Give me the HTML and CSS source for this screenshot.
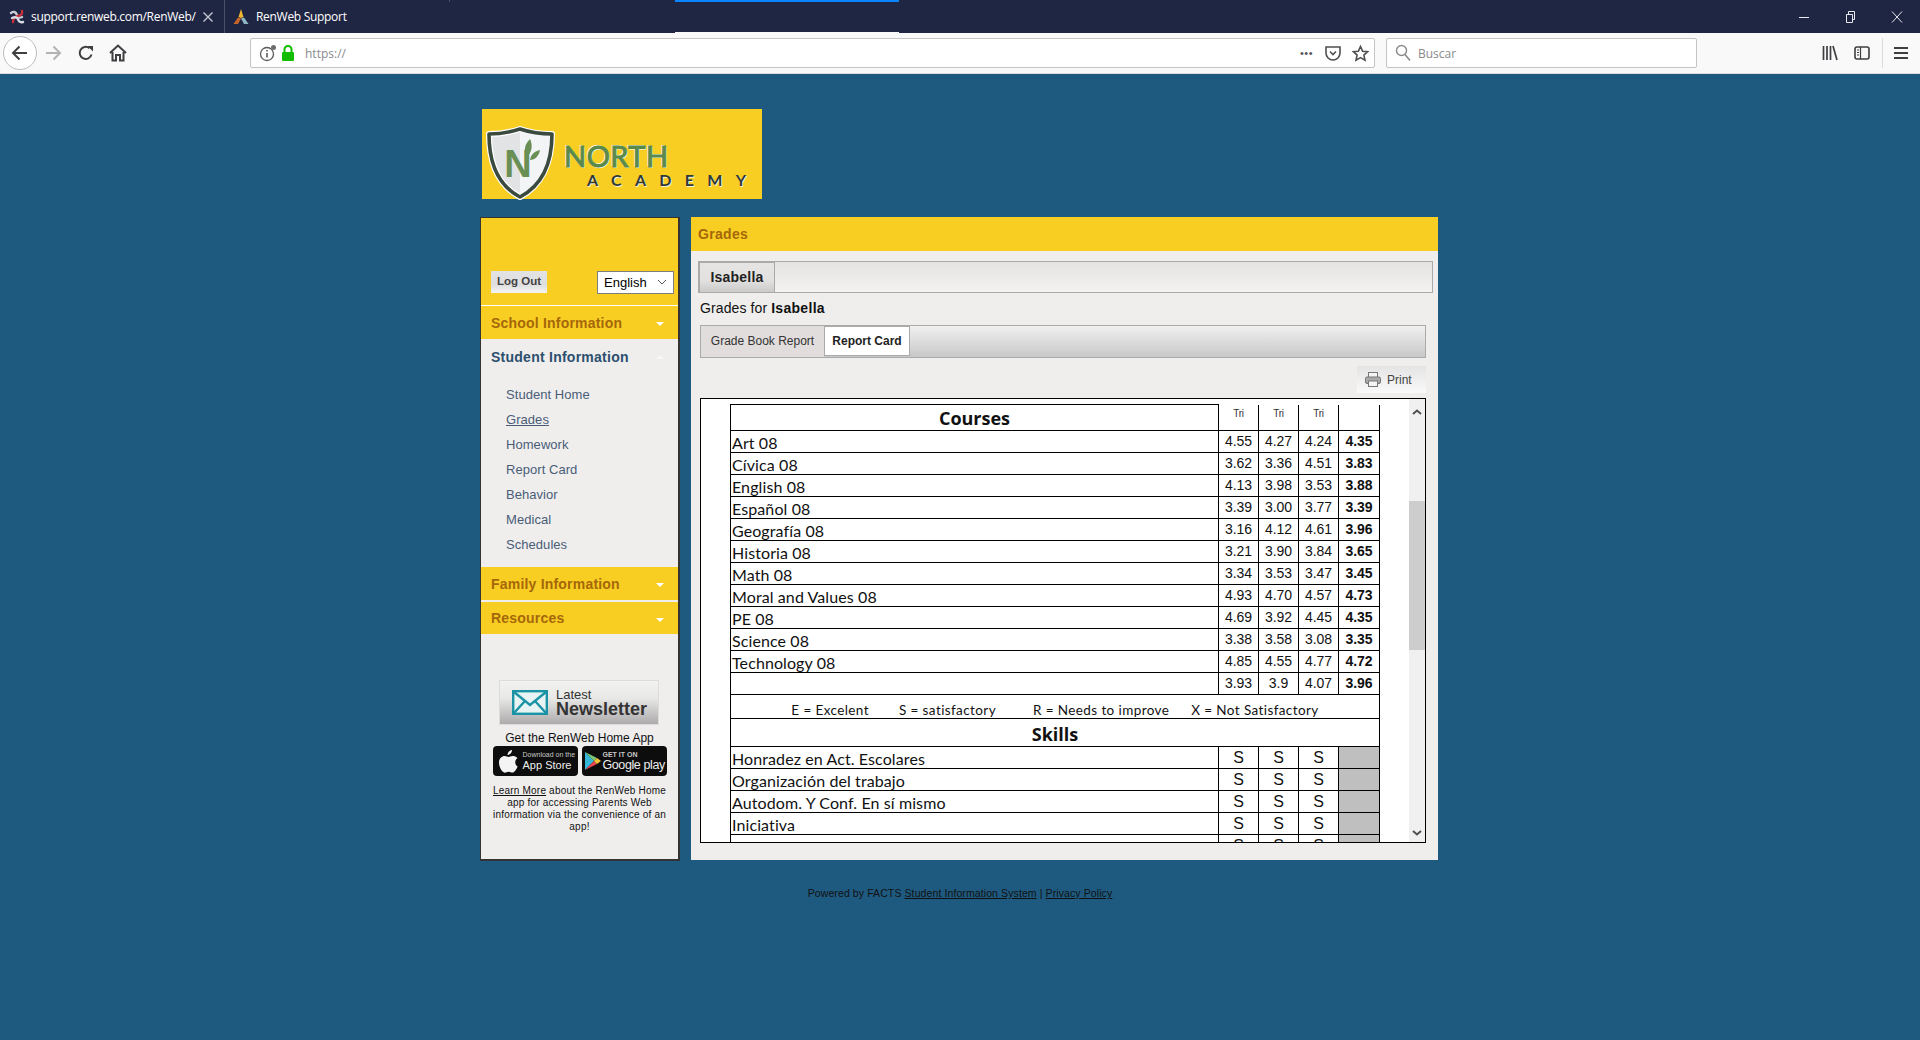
FILE: index.html
```html
<!DOCTYPE html>
<html lang="en">
<head>
  <meta charset="UTF-8">
  <title>Grades</title>
  <link rel="stylesheet" href="styles.css">
</head>
<body>
  <!-- browser chrome -->
  <div class="tabstrip">
    <div class="tab tab-first">
      <svg class="fav" width="16" height="16" viewBox="0 0 16 16"><g fill="none" stroke-width="2.4" stroke-linecap="round"><path d="M2 4 Q6 1 8 6 Q9 10 13 8" stroke="#c9cdd6"/><path d="M13 2 Q14 6 9 7 Q4 8 4 13" stroke="#c8303c"/><path d="M3 9 Q7 7 9 10 Q10 14 14 13" stroke="#d8dbe2"/></g></svg>
      <span class="tab-title">support.renweb.com/RenWeb/</span>
      <svg class="tab-close" width="12" height="12" viewBox="0 0 12 12"><path d="M1.5 1.5 L10.5 10.5 M10.5 1.5 L1.5 10.5" stroke="#c6c8d0" stroke-width="1.4"/></svg>
    </div>
    <div class="tab tab-second">
      <svg class="fav" width="18" height="18" viewBox="0 0 18 18"><path d="M9 1 L11.5 9 L9 10 L6.5 9 Z" fill="#f2b632"/><path d="M6 9.5 L9 10.5 L6 16 L1.5 16 Z" fill="#c9652a"/><path d="M12 9.5 L9 10.5 L12 16 L16.5 16 Z" fill="#8fb6c4"/></svg>
      <span class="tab-title">RenWeb Support</span>
    </div>
    <div class="tab-mark"></div>
    <div class="tab-active"></div>
    <div class="win-controls">
      <svg width="10" height="10" viewBox="0 0 10 10"><path d="M0 5.5 H10" stroke="#e8e9ee" stroke-width="1"/></svg>
      <svg width="10" height="12" viewBox="0 0 10 12"><path d="M1.5 3.5 H7.5 V11.5 H1.5 Z M3.5 3.5 V.5 H9.5 V8.5 H7.5" fill="none" stroke="#e8e9ee"/></svg>
      <svg width="12" height="12" viewBox="0 0 12 12"><path d="M1 0.5 L11 11.5 M11 0.5 L1 11.5" stroke="#e8e9ee" stroke-width="1"/></svg>
    </div>
  </div>

  <div class="toolbar">
    <div class="back-btn">
      <svg width="18" height="18" viewBox="0 0 18 18"><path d="M16 9 H2 M8.5 2.5 L2 9 L8.5 15.5" fill="none" stroke="#3f3f42" stroke-width="2"/></svg>
    </div>
    <svg class="tool-forward" width="18" height="18" viewBox="0 0 18 18"><path d="M2 9 H16 M9.5 2.5 L16 9 L9.5 15.5" fill="none" stroke="#b3b3b5" stroke-width="2"/></svg>
    <svg class="tool-reload" width="16" height="16" viewBox="0 0 16 16"><path d="M13.5 9.5 A6 6 0 1 1 11.5 3.2" fill="none" stroke="#3f3f42" stroke-width="2"/><path d="M9.5 1 H15 V6.5 Z" fill="#3f3f42"/></svg>
    <svg class="tool-home" width="18" height="18" viewBox="0 0 18 18"><path d="M1 9 L9 1.5 L17 9 M3.5 8 V16.5 H7 V11 H11 V16.5 H14.5 V8" fill="none" stroke="#3f3f42" stroke-width="2"/></svg>

    <div class="urlbar">
      <svg class="url-info" width="18" height="18" viewBox="0 0 18 18"><circle cx="8" cy="10" r="6.5" fill="none" stroke="#5b5b5f" stroke-width="1.3"/><path d="M8 9 V13.5 M8 6 V7.5" stroke="#5b5b5f" stroke-width="1.6"/><circle cx="14.5" cy="3.5" r="2.5" fill="#6d6d70"/></svg>
      <svg class="url-lock" width="14" height="16" viewBox="0 0 14 16"><path d="M3.5 7 V4.5 A3.5 3.5 0 0 1 10.5 4.5 V7" fill="none" stroke="#12bc00" stroke-width="2"/><rect x="1" y="7" width="12" height="9" rx="1" fill="#12bc00"/></svg>
      <span class="url-text">https://</span>
      <span class="url-dots">•••</span>
      <svg class="url-pocket" width="16" height="16" viewBox="0 0 16 16"><path d="M1 2 H15 V8 A7 7 0 0 1 1 8 Z" fill="none" stroke="#4f4f52" stroke-width="1.6"/><path d="M5 6.5 L8 9.5 L11 6.5" fill="none" stroke="#4f4f52" stroke-width="1.6"/></svg>
      <svg class="url-star" width="17" height="17" viewBox="0 0 17 17"><path d="M8.5 1.5 L10.6 6.2 L15.7 6.7 L11.9 10.1 L13 15.2 L8.5 12.6 L4 15.2 L5.1 10.1 L1.3 6.7 L6.4 6.2 Z" fill="none" stroke="#4f4f52" stroke-width="1.6"/></svg>
    </div>

    <div class="searchbar">
      <svg width="16" height="18" viewBox="0 0 16 18"><circle cx="6.5" cy="6.5" r="5" fill="none" stroke="#8a8a8d" stroke-width="1.4"/><path d="M10 10.5 L15 16.5" stroke="#8a8a8d" stroke-width="1.6"/></svg>
      <span>Buscar</span>
    </div>

    <svg class="tool-library" width="16" height="16" viewBox="0 0 16 16"><path d="M1.5 1 V15 M5 1 V15 M8.5 1 V15 M11 1 L15 15" stroke="#3f3f42" stroke-width="1.7" fill="none"/></svg>
    <svg class="tool-sidebar" width="16" height="16" viewBox="0 0 16 16"><rect x="1" y="2" width="14" height="12" rx="2" fill="none" stroke="#3f3f42" stroke-width="1.6"/><path d="M6.5 2 V14 M3 5 H5 M3 7.5 H5 M3 10 H5" stroke="#3f3f42" stroke-width="1.2"/></svg>
    <div class="tool-sep"></div>
    <svg class="tool-menu" width="14" height="14" viewBox="0 0 14 14"><path d="M0 2 H14 M0 7 H14 M0 12 H14" stroke="#3f3f42" stroke-width="2"/></svg>
  </div>

  <!-- page -->
  <div class="page">
    <div class="wrap">
      <div class="logo">
        <svg class="logo-shield" width="70" height="74" viewBox="0 0 70 74">
          <path d="M4 8 Q20 8 35 3 Q50 8 67 8 C67 38 56 60 35 71 C14 60 4 38 4 8 Z" fill="#e2e3e5" stroke="#fff" stroke-width="6" stroke-linejoin="round"/>
          <path d="M35 3 Q50 8 67 8 C67 38 56 60 35 71 Z" fill="#f3f4f5"/>
          <path d="M4 8 Q20 8 35 3 Q50 8 67 8 C67 38 56 60 35 71 C14 60 4 38 4 8 Z" fill="none" stroke="#3b4a3f" stroke-width="3.6" stroke-linejoin="round"/>
          <text x="33" y="51" text-anchor="middle" class="shield-n">N</text>
          <path d="M42 31 C38 24 40 18 45 13 C48 19 47 26 42 31 Z M45 34 C46 28 50 25 55 24 C54 30 50 34 45 34 Z" fill="#6a8f55"/>
        </svg>
        <div class="logo-text">
          <div class="logo-north">NORTH</div>
          <div class="logo-academy">ACADEMY</div>
        </div>
      </div>

      <div class="columns">
        <div class="sidebar">
          <div class="side-top">
            <span class="logout">Log Out</span>
            <div class="lang">English
              <svg width="10" height="6" viewBox="0 0 10 6"><path d="M1 1 L5 5 L9 1" fill="none" stroke="#555" stroke-width="1"/></svg>
            </div>
          </div>
          <div class="side-head side-head-line">School Information<i class="caret"></i></div>
          <div class="side-open">Student Information<i class="caret caret-up"></i></div>
          <ul class="side-links">
            <li>Student Home</li>
            <li class="current">Grades</li>
            <li>Homework</li>
            <li>Report Card</li>
            <li>Behavior</li>
            <li>Medical</li>
            <li>Schedules</li>
          </ul>
          <div class="side-head">Family Information<i class="caret"></i></div>
          <div class="side-head side-head-next">Resources<i class="caret"></i></div>

          <div class="newsletter">
            <svg width="36" height="25" viewBox="0 0 36 25"><rect x="1.2" y="1.2" width="33.6" height="22.6" fill="#e8f3f4" stroke="#1a93a5" stroke-width="2.4"/><path d="M2 2 L18 15 L34 2 M2 23 L13 11 M34 23 L23 11" fill="none" stroke="#1a93a5" stroke-width="2.4"/></svg>
            <div class="news-text"><span>Latest</span><b>Newsletter</b></div>
          </div>
          <div class="app-title">Get the RenWeb Home App</div>
          <div class="badges">
            <div class="badge badge-apple">
              <svg width="19" height="23" viewBox="0 0 19 23"><path d="M13 0 C13.2 2.6 11 5 8.6 4.9 C8.4 2.6 10.7 .2 13 0 Z M18.6 16.5 C17.6 19 15.6 22.6 13.4 22.6 C12 22.6 11.4 21.7 9.6 21.7 C7.8 21.7 7.2 22.6 5.8 22.7 C3.4 22.8 0 17.6 0 12.6 C0 8.2 3 6 5.6 6 C7.2 6 8.6 7 9.6 7 C10.6 7 12.2 5.8 14.2 6 C15 6 17.2 6.4 18.4 8.2 C15.2 10.2 15.8 15.2 18.6 16.5 Z" fill="#f4f4f4"/></svg>
              <div><small>Download on the</small><span>App Store</span></div>
            </div>
            <div class="badge badge-google">
              <svg width="16" height="18" viewBox="0 0 16 18"><path d="M0 0 L9 9 L0 18 Z" fill="#35b8d8"/><path d="M0 0 L12 6 L9 9 Z" fill="#7cc576"/><path d="M0 18 L12 12 L9 9 Z" fill="#e8434f"/><path d="M12 6 L16 9 L12 12 L9 9 Z" fill="#f6c333"/></svg>
              <div><small>GET IT ON</small><span>Google play</span></div>
            </div>
          </div>
          <p class="app-note"><u>Learn More</u> about the RenWeb Home app for accessing Parents Web information via the convenience of an app!</p>
        </div>

        <div class="main">
          <div class="main-head">Grades</div>
          <div class="student-tabs"><div class="student-tab">Isabella</div></div>
          <div class="grades-for">Grades for <b>Isabella</b></div>
          <div class="report-tabs">
            <div class="report-tab">Grade Book Report</div>
            <div class="report-tab report-tab-on">Report Card</div>
          </div>
          <div class="print-row">
            <div class="print-btn">
              <svg width="16" height="15" viewBox="0 0 16 15"><rect x="3.5" y=".5" width="9" height="5" fill="#f4f4f4" stroke="#777"/><rect x=".5" y="5" width="15" height="6.5" rx="1.5" fill="#a9a9a9" stroke="#777"/><rect x="3.5" y="9" width="9" height="5.5" fill="#f4f4f4" stroke="#777"/></svg>
              Print
            </div>
          </div>

          <div class="frame">
            <div class="frame-view">
              <table class="card">
                <colgroup><col class="c-name"><col class="c-num"><col class="c-num"><col class="c-num"><col class="c-last"></colgroup>
                <tr class="r-head"><th class="h-courses">Courses</th><td class="tri">Tri</td><td class="tri">Tri</td><td class="tri">Tri</td><td class="tri"></td></tr>
                <tr><td class="name">Art 08</td><td>4.55</td><td>4.27</td><td>4.24</td><td class="avg">4.35</td></tr>
                <tr><td class="name">Cívica 08</td><td>3.62</td><td>3.36</td><td>4.51</td><td class="avg">3.83</td></tr>
                <tr><td class="name">English 08</td><td>4.13</td><td>3.98</td><td>3.53</td><td class="avg">3.88</td></tr>
                <tr><td class="name">Español 08</td><td>3.39</td><td>3.00</td><td>3.77</td><td class="avg">3.39</td></tr>
                <tr><td class="name">Geografía 08</td><td>3.16</td><td>4.12</td><td>4.61</td><td class="avg">3.96</td></tr>
                <tr><td class="name">Historia 08</td><td>3.21</td><td>3.90</td><td>3.84</td><td class="avg">3.65</td></tr>
                <tr><td class="name">Math 08</td><td>3.34</td><td>3.53</td><td>3.47</td><td class="avg">3.45</td></tr>
                <tr><td class="name">Moral and Values 08</td><td>4.93</td><td>4.70</td><td>4.57</td><td class="avg">4.73</td></tr>
                <tr><td class="name">PE 08</td><td>4.69</td><td>3.92</td><td>4.45</td><td class="avg">4.35</td></tr>
                <tr><td class="name">Science 08</td><td>3.38</td><td>3.58</td><td>3.08</td><td class="avg">3.35</td></tr>
                <tr><td class="name">Technology 08</td><td>4.85</td><td>4.55</td><td>4.77</td><td class="avg">4.72</td></tr>
                <tr><td class="name"></td><td>3.93</td><td>3.9</td><td>4.07</td><td class="avg">3.96</td></tr>
                <tr class="r-legend"><td colspan="5"><span>E = Excelent</span><span class="lg-s">S = satisfactory</span><span class="lg-r">R = Needs to improve</span><span class="lg-x">X = Not Satisfactory</span></td></tr>
                <tr class="r-skills"><th colspan="5">Skills</th></tr>
                <tr class="skill"><td class="name">Honradez en Act. Escolares</td><td>S</td><td>S</td><td>S</td><td class="blank"></td></tr>
                <tr class="skill"><td class="name">Organización del trabajo</td><td>S</td><td>S</td><td>S</td><td class="blank"></td></tr>
                <tr class="skill"><td class="name">Autodom. Y Conf. En sí mismo</td><td>S</td><td>S</td><td>S</td><td class="blank"></td></tr>
                <tr class="skill"><td class="name">Iniciativa</td><td>S</td><td>S</td><td>S</td><td class="blank"></td></tr>
                <tr class="skill"><td class="name">Compromiso</td><td>S</td><td>S</td><td>S</td><td class="blank"></td></tr>
              </table>
            </div>
            <div class="scrollbar">
              <div class="scroll-arrow"><svg width="10" height="6" viewBox="0 0 10 6"><path d="M1 5 L5 1.5 L9 5" fill="none" stroke="#505050" stroke-width="2"/></svg></div>
              <div class="scroll-thumb"></div>
              <div class="scroll-arrow scroll-arrow-end"><svg width="10" height="6" viewBox="0 0 10 6"><path d="M1 1 L5 4.5 L9 1" fill="none" stroke="#505050" stroke-width="2"/></svg></div>
            </div>
          </div>
        </div>
      </div>

      <div class="footer">Powered by FACTS <u>Student Information System</u> | <u>Privacy Policy</u></div>
    </div>
  </div>
</body>
</html>
```

FILE: styles.css
```css
body {
  margin: 0;
  height: 1040px;
  overflow: hidden;
  background: #1e5a80;
  font-family: "Liberation Sans", Arial, sans-serif;
}

/* browser chrome */
.tabstrip {
  display: flex;
  align-items: center;
  height: 33px;
  background: #1f2644;
  color: #fff;
  font-family: "Open Sans", sans-serif;
  font-size: 12px;
  letter-spacing: -.3px;
}

.tab {
  display: flex;
  align-items: center;
  height: 33px;
  box-sizing: border-box;
}

.tab-first {
  width: 225px;
  padding-left: 9px;
  border-right: 1px solid #4b5068;
}

.tab-first .tab-title {
  width: 166px;
  margin-left: 6px;
  overflow: hidden;
  white-space: nowrap;
}

.tab-close {
  margin-left: 5px;
}

.tab-second {
  width: 224px;
  padding-left: 7px;
}

.tab-second .tab-title {
  margin-left: 6px;
}

.tab-mark {
  width: 1px;
  height: 2px;
  align-self: flex-start;
  background: #4b5068;
}

.tab-active {
  width: 224px;
  height: 33px;
  margin-left: 225px;
  box-sizing: border-box;
  border-top: 2px solid #0a84ff;
  border-bottom: 1px solid #f9f9fa;
}

.win-controls {
  display: flex;
  align-items: center;
  gap: 36px;
  margin-left: auto;
  margin-right: 17px;
}

.toolbar {
  display: flex;
  align-items: center;
  height: 41px;
  box-sizing: border-box;
  background: #f9f9fa;
  border-bottom: 1px solid #dcdcde;
}

.back-btn {
  display: flex;
  align-items: center;
  justify-content: center;
  width: 32px;
  height: 32px;
  margin-left: 3px;
  border: 1px solid #bdbdbf;
  border-radius: 50%;
  background: #fff;
}

.tool-forward { margin-left: 7px; }
.tool-reload { margin-left: 16px; }
.tool-home { margin-left: 15px; }

.urlbar {
  display: flex;
  align-items: center;
  width: 1125px;
  height: 30px;
  margin-left: 123px;
  box-sizing: border-box;
  background: #fff;
  border: 1px solid #c4c4c6;
  border-radius: 2px;
}

.url-info { margin-left: 8px; }
.url-lock { margin-left: 4px; }

.url-text {
  margin-left: 10px;
  color: #8a8a8d;
  font-family: "Open Sans", sans-serif;
  font-size: 12px;
}

.url-dots {
  margin-left: auto;
  color: #55555a;
  font-size: 11px;
  letter-spacing: .5px;
}

.url-pocket { margin-left: 12px; }
.url-star { margin-left: 11px; margin-right: 5px; }

.searchbar {
  display: flex;
  align-items: center;
  gap: 7px;
  width: 311px;
  height: 30px;
  margin-left: 11px;
  padding-left: 8px;
  box-sizing: border-box;
  background: #fff;
  border: 1px solid #c4c4c6;
  border-radius: 2px;
  color: #8a8a8d;
  font-family: "Open Sans", sans-serif;
  font-size: 12px;
}

.tool-library { margin-left: 125px; }
.tool-sidebar { margin-left: 16px; }

.tool-sep {
  width: 1px;
  height: 30px;
  margin-left: 12px;
  background: #dcdcde;
}

.tool-menu { margin-left: 11px; }

/* page */
.page {
  padding-top: 35px;
}

.wrap {
  width: 960px;
  margin: 0 auto;
}

.logo {
  display: flex;
  width: 280px;
  height: 90px;
  margin-left: 2px;
  padding: 17px 0 0 3px;
  box-sizing: border-box;
  background: #f9ce23;
}

.logo-shield {
  flex-shrink: 0;
}

.shield-n {
  font-family: "Liberation Sans", sans-serif;
  font-size: 38px;
  font-weight: bold;
  fill: #6a8f55;
}

.logo-text {
  margin-left: 9px;
  padding-top: 16px;
}

.logo-north {
  color: #5a8a4a;
  font-family: Lato, sans-serif;
  font-size: 29px;
  line-height: 27px;
  letter-spacing: .5px;
  -webkit-text-stroke: 1px #5a8a4a;
  text-shadow: 1px 1px 0 #fff, -1px -1px 0 #fff;
}

.logo-academy {
  margin-top: 3px;
  padding-left: 23px;
  color: #2f3a33;
  font-family: Lato, sans-serif;
  font-size: 16px;
  font-weight: bold;
  line-height: 15px;
  letter-spacing: 13.3px;
  white-space: nowrap;
  text-shadow: 1px 1px 0 #f6f3e0;
}

.columns {
  display: flex;
  gap: 11px;
  margin-top: 18px;
}

/* sidebar */
.sidebar {
  width: 200px;
  height: 644px;
  box-sizing: border-box;
  background: #efeeed;
  border: 1px solid #333;
  border-right-width: 2px;
  border-bottom-width: 2px;
}

.side-top {
  display: flex;
  align-items: center;
  justify-content: space-between;
  height: 87px;
  padding: 41px 4px 0 10px;
  box-sizing: border-box;
  background: #f9ce23;
}

.logout {
  display: block;
  width: 56px;
  height: 22px;
  background: linear-gradient(#e4e3e3, #dfdede 60%, #f4f4f4);
  color: #444;
  font-size: 11.5px;
  font-weight: bold;
  line-height: 21px;
  text-align: center;
}

.lang {
  display: flex;
  align-items: center;
  justify-content: space-between;
  width: 77px;
  height: 23px;
  padding: 0 6px;
  box-sizing: border-box;
  background: #fff;
  border: 1px solid #7d7d7d;
  font-size: 13px;
}

.side-head {
  display: flex;
  align-items: center;
  justify-content: space-between;
  height: 33px;
  padding: 0 14px 0 10px;
  background: #f9ce23;
  color: #a5670a;
  font-size: 14px;
  font-weight: bold;
  letter-spacing: .2px;
}

.side-head-line {
  height: 33px;
  border-top: 1px solid #fff;
}

.side-head-next {
  height: 32px;
  margin-top: 2px;
}

.caret {
  width: 0;
  height: 0;
  margin-top: 3px;
  border-top: 4px solid #fff;
  border-left: 4px solid transparent;
  border-right: 4px solid transparent;
}

.caret-up {
  margin-top: 0;
  border-top: 0;
  border-bottom: 4px solid #f6f6f6;
}

.side-open {
  display: flex;
  align-items: center;
  justify-content: space-between;
  height: 36px;
  padding: 0 14px 0 10px;
  color: #2c4f6e;
  font-size: 14px;
  font-weight: bold;
  letter-spacing: .25px;
}

.side-links {
  height: 192px;
  margin: 0;
  padding: 7px 0 0 25px;
  box-sizing: border-box;
  list-style: none;
  color: #4a5d78;
  font-size: 13px;
  letter-spacing: .05px;
}

.side-links li {
  height: 25px;
  line-height: 25px;
}

.side-links .current {
  text-decoration: underline;
}

.newsletter {
  display: flex;
  align-items: center;
  gap: 8px;
  width: 160px;
  height: 45px;
  margin: 46px 0 0 18px;
  padding-left: 12px;
  box-sizing: border-box;
  background: linear-gradient(#f2f2f1, #e8e8e7 40%, #adabab);
  border: 1px solid #dcdcdc;
}

.news-text {
  display: flex;
  flex-direction: column;
  color: #333;
  line-height: 14px;
  font-size: 13px;
}

.news-text b {
  font-size: 18px;
  line-height: 15px;
}

.app-title {
  margin-top: 6px;
  color: #111;
  font-size: 12px;
  line-height: 14px;
  text-align: center;
}

.badges {
  display: flex;
  justify-content: center;
  gap: 4px;
  margin-top: 1px;
}

.badge {
  display: flex;
  align-items: center;
  height: 30px;
  box-sizing: border-box;
  background: #0d0d0d;
  border-radius: 4px;
  color: #eee;
}

.badge-apple { width: 85px; padding-left: 6px; gap: 5px; }
.badge-google { width: 85px; padding-left: 3px; gap: 2px; }

.badge small {
  display: block;
  font-size: 7px;
  line-height: 8px;
  color: #c8c8c8;
  white-space: nowrap;
}

.badge span {
  display: block;
  font-size: 11px;
  line-height: 13px;
  white-space: nowrap;
}

.badge-google small {
  font-weight: bold;
}

.badge-google span {
  font-size: 12.5px;
  letter-spacing: -.4px;
}

.app-note {
  margin: 9px 5px 0;
  color: #111;
  font-size: 10px;
  line-height: 12px;
  letter-spacing: .2px;
  text-align: center;
}

/* main panel */
.main {
  width: 747px;
  height: 643px;
  background: #efeeed;
}

.main-head {
  height: 34px;
  padding-left: 7px;
  background: #f9ce23;
  color: #a5670a;
  font-size: 14px;
  font-weight: bold;
  letter-spacing: .3px;
  line-height: 34px;
}

.student-tabs {
  height: 32px;
  margin: 10px 5px 0 7px;
  box-sizing: border-box;
  background: linear-gradient(#e4e3e2, #f3f2f1);
  border: 1px solid #aaa;
}

.student-tab {
  width: 76px;
  height: 30px;
  box-sizing: border-box;
  background: linear-gradient(#e6e5e4, #e2e1e0 60%, #cbcaca);
  border-top: 1px solid #aaa;
  border-right: 1px solid #aaa;
  border-left: 1px solid #aaa;
  color: #222;
  font-size: 14px;
  font-weight: bold;
  letter-spacing: .2px;
  line-height: 28px;
  text-align: center;
}

.grades-for {
  height: 32px;
  margin-left: 9px;
  font-size: 14px;
  letter-spacing: .1px;
  line-height: 31px;
  color: #111;
}

.grades-for b {
  letter-spacing: .3px;
}

.report-tabs {
  display: flex;
  width: 726px;
  height: 33px;
  margin-left: 9px;
  box-sizing: border-box;
  background: linear-gradient(#f0f0f0, #c8c8c8);
  border: 1px solid #aaa;
}

.report-tab {
  width: 123px;
  height: 31px;
  background: #e1dddc;
  color: #333;
  font-size: 12px;
  line-height: 31px;
  text-align: center;
}

.report-tab-on {
  width: 86px;
  height: 30px;
  box-sizing: border-box;
  background: #fff;
  border: 1px solid #aaa;
  color: #222;
  font-weight: bold;
  line-height: 28px;
}

.print-row {
  display: flex;
  justify-content: flex-end;
  margin: 8px 12px 5px 0;
}

.print-btn {
  display: flex;
  align-items: center;
  gap: 6px;
  width: 69px;
  height: 27px;
  padding-left: 8px;
  box-sizing: border-box;
  background: linear-gradient(#e4e4e4, #f9f9f9);
  color: #444;
  font-size: 12px;
}

.frame {
  display: flex;
  width: 726px;
  height: 445px;
  margin-left: 9px;
  box-sizing: border-box;
  background: #fff;
  border: 1px solid #000;
}

.frame-view {
  flex: 1;
  overflow: hidden;
  padding: 5px 0 0 29px;
}

.scrollbar {
  display: flex;
  flex-direction: column;
  width: 16px;
  background: #f0f0f0;
}

.scroll-arrow {
  display: flex;
  justify-content: center;
  height: 24px;
  padding-top: 10px;
  box-sizing: border-box;
}

.scroll-arrow-end {
  margin-top: auto;
  padding-top: 12px;
}

.scroll-thumb {
  height: 149px;
  margin-top: 78px;
  background: #cdcdcd;
}

/* report card table */
.card {
  width: 650px;
  table-layout: fixed;
  border-collapse: collapse;
  color: #111;
  font-size: 14px;
  text-align: center;
}

.c-name { width: 488px; }
.c-num { width: 40px; }
.c-last { width: 41px; }

.card td,
.card th {
  height: 22px;
  padding: 0;
  box-sizing: border-box;
  border: 1px solid #000;
  line-height: 21px;
  vertical-align: top;
}

.card tr:first-child td {
  border-top: 0;
}

.r-head td,
.r-head th {
  height: 26px;
}

.card .h-courses {
  padding-top: 2px;
  font-family: "Open Sans", sans-serif;
  font-size: 18px;
  line-height: 22px;
}

.card .tri {
  color: #333;
  font-size: 10px;
  line-height: 18px;
  letter-spacing: -.3px;
}

.card .name {
  padding-top: 2px;
  padding-left: 1px;
  font-family: Lato, sans-serif;
  font-size: 16px;
  letter-spacing: .1px;
  line-height: 19px;
  text-align: left;
  white-space: nowrap;
}

.avg {
  font-weight: bold;
}

.skill td {
  font-size: 16px;
}

.blank {
  background: #bfbfbf;
}

.card .r-legend td {
  height: 24px;
  padding-top: 7px;
  font-family: Lato, sans-serif;
  font-size: 13.5px;
  line-height: 16px;
  letter-spacing: .4px;
}

.lg-s { margin-left: 30px; }
.lg-r { margin-left: 37px; }
.lg-x { margin-left: 22px; }

.card .r-skills th {
  height: 28px;
  padding-top: 3px;
  font-family: "Open Sans", sans-serif;
  font-size: 18px;
  line-height: 24px;
}

.footer {
  margin-top: 26px;
  color: #111;
  font-size: 10.5px;
  line-height: 12px;
  letter-spacing: .1px;
  text-align: center;
}
```
